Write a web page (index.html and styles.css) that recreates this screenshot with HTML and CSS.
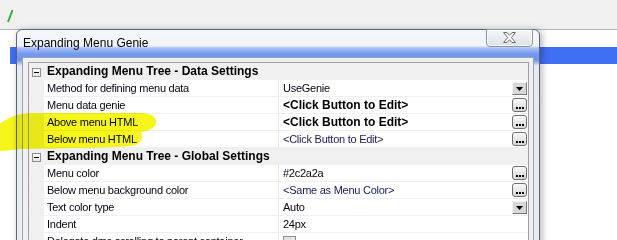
FILE: index.html
```html
<!DOCTYPE html>
<html>
<head>
<meta charset="utf-8">
<title>Expanding Menu Genie</title>
<link rel="stylesheet" href="styles.css">
</head>
<body>
<div class="app">
  <div class="toolbar">
    <svg class="green-mark" width="8" height="14" viewBox="0 0 8 14"><path d="M6.5 1 L2 13" stroke="#3aa83a" stroke-width="2" fill="none"/></svg>
  </div>
  <div class="spacer"></div>
  <div class="blueband"></div>
  <div class="content"></div>
</div>

<div class="dialog">
  <div class="titlebar">
    <span class="title">Expanding Menu Genie</span>
    <button class="close" aria-label="Close">
      <svg width="13" height="11" viewBox="0 0 13 11"><polygon points="0.5,0.5 4,0.5 6.5,3.3 9,0.5 12.5,0.5 8.4,5.5 12.5,10.5 9,10.5 6.5,7.7 4,10.5 0.5,10.5 4.6,5.5" fill="#fff" stroke="#6f6f6f" stroke-width="1" stroke-linejoin="round"/></svg>
    </button>
  </div>
  <div class="frame">
    <div class="grid">
      <div class="row cat">
        <span class="gutter"><span class="minus"></span></span>
        <span class="cat-label">Expanding Menu Tree - Data Settings</span>
      </div>
      <div class="row">
        <span class="gutter"></span>
        <span class="label">Method for defining menu data</span>
        <span class="value">UseGenie<span class="btn-drop"><svg width="7" height="4" viewBox="0 0 7 4"><path d="M0 0 H7 L3.5 4 Z" fill="#000"/></svg></span></span>
      </div>
      <div class="row">
        <span class="gutter"></span>
        <span class="label">Menu data genie</span>
        <span class="value bold">&lt;Click Button to Edit&gt;<span class="btn-dots"><i></i><i></i><i></i></span></span>
      </div>
      <div class="row">
        <span class="gutter"></span>
        <span class="label">Above menu HTML</span>
        <span class="value bold">&lt;Click Button to Edit&gt;<span class="btn-dots"><i></i><i></i><i></i></span></span>
      </div>
      <div class="row">
        <span class="gutter"></span>
        <span class="label">Below menu HTML</span>
        <span class="value navy">&lt;Click Button to Edit&gt;<span class="btn-dots"><i></i><i></i><i></i></span></span>
      </div>
      <div class="row cat">
        <span class="gutter"><span class="minus"></span></span>
        <span class="cat-label">Expanding Menu Tree - Global Settings</span>
      </div>
      <div class="row">
        <span class="gutter"></span>
        <span class="label">Menu color</span>
        <span class="value">#2c2a2a<span class="btn-dots"><i></i><i></i><i></i></span></span>
      </div>
      <div class="row">
        <span class="gutter"></span>
        <span class="label">Below menu background color</span>
        <span class="value navy">&lt;Same as Menu Color&gt;<span class="btn-dots"><i></i><i></i><i></i></span></span>
      </div>
      <div class="row">
        <span class="gutter"></span>
        <span class="label">Text color type</span>
        <span class="value">Auto<span class="btn-drop"><svg width="7" height="4" viewBox="0 0 7 4"><path d="M0 0 H7 L3.5 4 Z" fill="#000"/></svg></span></span>
      </div>
      <div class="row">
        <span class="gutter"></span>
        <span class="label">Indent</span>
        <span class="value">24px</span>
      </div>
      <div class="row">
        <span class="gutter"></span>
        <span class="label">Delegate dmc scrolling to parent container</span>
        <span class="value"><span class="check"></span></span>
      </div>
    </div>
  </div>
</div>

<svg class="highlight" width="617" height="240" viewBox="0 0 617 240">
  <path d="M0 124 C7 118 15 114 30 113 L140 113 C151 113 157 117 156 123 C155 128 149 131 141 132 C143 136 142 142 136 145 C126 148 60 148 22 149 C10 150 3 151 0 151 Z" fill="#f6f61a"/>
</svg>
</body>
</html>
```

FILE: styles.css
```css
* {
  box-sizing: border-box;
  margin: 0;
  padding: 0;
}

html,
body {
  width: 617px;
  height: 240px;
  overflow: hidden;
}

body {
  position: relative;
  background: #fff;
  font-family: "Liberation Sans", Arial, sans-serif;
  color: #000;
}

/* background application */
.app {
  display: flex;
  flex-direction: column;
  height: 240px;
}

.toolbar {
  height: 30px;
  background: #f0f0f0;
  border-bottom: 1px solid #b5b5b5;
  padding: 9px 0 0 6px;
}

.green-mark {
  display: block;
}

.spacer {
  height: 17px;
  background: #fff;
}

.blueband {
  height: 17px;
  margin-left: 10px;
  background: #3f6ff2;
}

.content {
  flex: 1;
  background: #fff;
}

/* dialog window */
.dialog {
  position: absolute;
  left: 16px;
  top: 29px;
  width: 524px;
  height: 230px;
  border: 1px solid #5d6570;
  border-radius: 6px 6px 0 0;
  background: linear-gradient(180deg,
    #f4f6f9 0,
    #f1f3f7 16px,
    #a9c0f4 18px,
    #7299f0 24px,
    #6c94ef 30px,
    #a6bef2 33px,
    #e6ebf3 36px,
    #e9edf3 100%);
  box-shadow: 2px 1px 7px rgba(0, 0, 0, 0.3);
  display: flex;
  flex-direction: column;
}

.titlebar {
  height: 27px;
  display: flex;
  align-items: center;
  padding-left: 6px;
}

.title {
  font-size: 12px;
  line-height: 14px;
  color: #000;
  margin-top: -1px;
}

.close {
  margin-left: auto;
  margin-right: 6px;
  align-self: flex-start;
  margin-top: -1px;
  width: 47px;
  height: 18px;
  border: 1px solid #8e949c;
  border-radius: 0 0 4px 4px;
  background: linear-gradient(180deg, #f5f6f8 0, #e9ecf0 50%, #dde1e7 100%);
  box-shadow: inset 0 0 0 1px rgba(255, 255, 255, 0.7);
  display: flex;
  align-items: center;
  justify-content: center;
  padding-bottom: 1px;
}

.close svg {
  display: block;
}

.frame {
  flex: 1;
  margin: 0 5px;
  border: 1px solid #98a2b0;
  border-bottom: none;
  background: #f0f0f0;
  padding: 4px 4px 0 5px;
}

.grid {
  border: 1px solid #a0a0a0;
  background: #fff;
  height: 100%;
}

.row {
  display: grid;
  grid-template-columns: 15px 235px 249px;
  height: 17px;
  border-bottom: 1px solid #efefef;
  font-size: 11px;
  letter-spacing: -0.25px;
  line-height: 16px;
}

.gutter {
  background: #f0f0f0;
  position: relative;
}

.label {
  padding-left: 3px;
  border-right: 1px solid #e6e6e6;
  white-space: nowrap;
  overflow: hidden;
  color: #050510;
}

.value {
  padding: 0 1px 0 4px;
  display: flex;
  align-items: center;
  justify-content: space-between;
  white-space: nowrap;
  color: #050510;
}

.value.navy {
  color: #1a1a5c;
}

.value.bold {
  font-weight: bold;
  font-size: 12px;
  letter-spacing: 0;
  color: #000;
}

.row.cat {
  grid-template-columns: 15px 1fr;
  background: #f0f0f0;
  border-bottom-color: #f0f0f0;
}

.cat-label {
  font-weight: bold;
  font-size: 12px;
  letter-spacing: 0;
  padding-left: 3px;
  line-height: 16px;
}

.minus {
  position: absolute;
  left: 3px;
  top: 5px;
  width: 9px;
  height: 9px;
  border: 1px solid #8f8f8f;
  background: linear-gradient(180deg, #ffffff 0, #e4e4e4 100%);
}

.minus::after {
  content: "";
  position: absolute;
  left: 1px;
  top: 3px;
  width: 5px;
  height: 1px;
  background: #000;
}

.btn-drop {
  width: 15px;
  height: 13px;
  border: 1px solid;
  border-color: #f4f4f4 #7a7a7a #7a7a7a #f4f4f4;
  background: #d8d8d8;
  display: flex;
  align-items: center;
  justify-content: center;
  padding-top: 1px;
}

.btn-drop svg {
  display: block;
}

.btn-dots {
  width: 15px;
  height: 14px;
  border: 1px solid #6f6f6f;
  border-radius: 3px;
  background: linear-gradient(180deg, #fafafa 0, #e6e6e6 55%, #d6d6d6 100%);
  display: flex;
  align-items: flex-end;
  justify-content: center;
  gap: 1px;
  padding-bottom: 2px;
}

.btn-dots i {
  display: block;
  width: 2px;
  height: 2px;
  background: #000;
}

.check {
  display: block;
  width: 13px;
  height: 13px;
  margin-top: 3px;
  border: 1px solid #8e8f8f;
  background: linear-gradient(135deg, #dcdcdc 0, #f4f4f4 100%);
}

/* yellow highlighter stroke drawn over the screenshot */
.highlight {
  position: absolute;
  left: 0;
  top: 0;
  pointer-events: none;
  mix-blend-mode: multiply;
}
```
